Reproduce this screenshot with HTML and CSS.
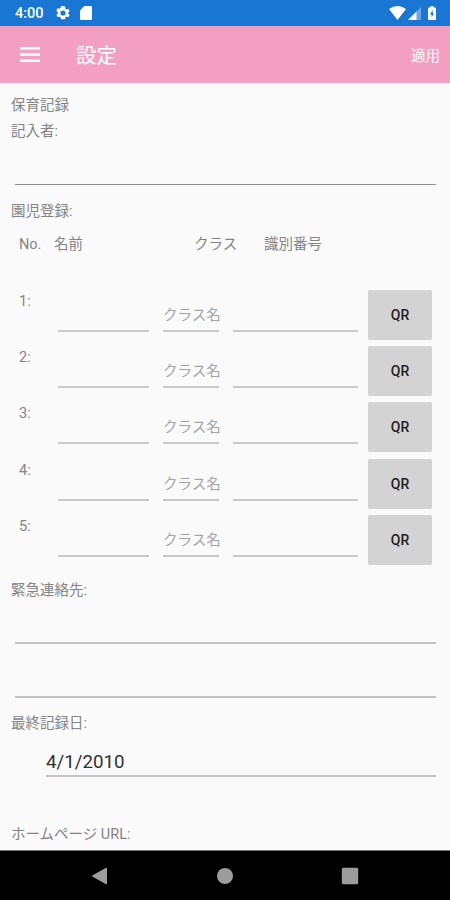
FILE: index.html
```html
<!DOCTYPE html>
<html lang="ja">
<head>
<meta charset="utf-8">
<title>設定</title>
<link rel="stylesheet" href="styles.css">
</head>
<body>
<div class="status">
  <span class="clock">4:00</span>
  <svg class="gear" viewBox="2 2 20 20"><path fill="#fff" fill-rule="evenodd" d="M19.4 13a7.5 7.5 0 0 0 0-2l2.1-1.6-2-3.5-2.5 1a7.5 7.5 0 0 0-1.7-1L15 2.2H9l-.4 2.7a7.5 7.5 0 0 0-1.7 1l-2.4-1-2 3.5L4.6 11a7.5 7.5 0 0 0 0 2l-2.1 1.6 2 3.5 2.4-1a7.5 7.5 0 0 0 1.7 1l.4 2.7h6l.4-2.7a7.5 7.5 0 0 0 1.7-1l2.4 1 2-3.5zM12 8.3a3.7 3.7 0 1 1 0 7.4 3.7 3.7 0 0 1 0-7.4z"/></svg>
  <svg class="card" viewBox="0 0 12 14"><path fill="#fff" d="M4.3 0H10.7Q12 0 12 1.3V12.7Q12 14 10.7 14H1.3Q0 14 0 12.7V4.5z"/></svg>
  <span class="spacer"></span>
  <svg class="wifi" viewBox="0 0 17 14"><path fill="#fff" d="M0 3Q8.5-3 17 3L8.5 14z"/></svg>
  <svg class="signal" viewBox="0 0 13 13"><path fill="#fff" opacity=".35" d="M13 0V13H0z"/><path fill="#fff" d="M8.5 4.5V13H0z"/></svg>
  <svg class="battery" viewBox="0 0 8 14"><path fill="#fff" d="M2.5 0h3v1.500H7q1 0 1 1V13q0 1-1 1H1q-1 0-1-1V2.500q0-1 1-1h1.500z"/><path fill="#1976d2" d="M4.7 4L2 8.400h1.600V11.500L6 7.200H4.700z"/></svg>
</div>
<header class="appbar">
  <svg class="menu" viewBox="0 0 20 15"><path fill="#fff" d="M0 0h20v2.500H0zM0 6.200h20v2.500H0zM0 12.400h20v2.500H0z"/></svg>
  <h1>設定</h1>
  <span class="apply">適用</span>
</header>
<main>
  <div class="label">保育記録</div>
  <div class="label">記入者:</div>
  <div class="field author"></div>
  <div class="label">園児登録:</div>
  <div class="heads"><span>No.</span><span>名前</span><span>クラス</span><span>識別番号</span></div>
  <div class="rows">
    <div class="row"><span class="num">1:</span><span class="cell name"></span><span class="cell class">クラス名</span><span class="cell ident"></span><span class="qr">QR</span></div>
    <div class="row"><span class="num">2:</span><span class="cell name"></span><span class="cell class">クラス名</span><span class="cell ident"></span><span class="qr">QR</span></div>
    <div class="row"><span class="num">3:</span><span class="cell name"></span><span class="cell class">クラス名</span><span class="cell ident"></span><span class="qr">QR</span></div>
    <div class="row"><span class="num">4:</span><span class="cell name"></span><span class="cell class">クラス名</span><span class="cell ident"></span><span class="qr">QR</span></div>
    <div class="row"><span class="num">5:</span><span class="cell name"></span><span class="cell class">クラス名</span><span class="cell ident"></span><span class="qr">QR</span></div>
  </div>
  <div class="label">緊急連絡先:</div>
  <div class="field contact-a"></div>
  <div class="field contact-b"></div>
  <div class="label">最終記録日:</div>
  <div class="field date">4/1/2010</div>
  <div class="label">ホームページ URL:</div>
</main>
<nav class="navbar">
  <svg viewBox="0 0 18 18"><path fill="#9c9c9c" d="M1.5 9L15.500 1Q17 .3 17 1.500V16.500Q17 17.700 15.500 17z"/></svg>
  <svg viewBox="0 0 18 18"><circle cx="9" cy="9" r="8" fill="#9c9c9c"/></svg>
  <svg viewBox="0 0 18 18"><rect x=".8" y=".8" width="16.4" height="16.4" rx="1.5" fill="#9c9c9c"/></svg>
</nav>
</body>
</html>
```
FILE: styles.css
```css
* { box-sizing: border-box; }
body {
  margin: 0;
  width: 450px;
  height: 900px;
  overflow: hidden;
  display: flex;
  flex-direction: column;
  background: #fafafa;
  color: #858585;
  font-family: Roboto, "Noto Sans CJK JP", sans-serif;
  font-size: 14.5px;
  font-weight: 400;
}
svg { display: block; flex: none; }
.status {
  flex: none;
  height: 25.5px;
  display: flex;
  align-items: center;
  padding: 1px 14px 0 15px;
  background: #1976d2;
  color: #fff;
}
.clock { width: 41px; font-size: 14.5px; font-weight: 500; }
.gear { width: 14px; height: 14px; }
.card { width: 12px; height: 14px; margin-left: 10px; }
.spacer { flex: 1; }
.wifi { width: 17px; height: 14px; }
.signal { width: 13px; height: 13px; margin: 1px 7px 0 2px; }
.battery { width: 8px; height: 14px; }
.appbar {
  flex: none;
  height: 57.5px;
  display: flex;
  align-items: center;
  padding: 0 10px 0 20px;
  background: #f29fc2;
  color: #fff;
}
.menu { width: 20px; height: 15px; }
h1 { flex: 1; margin: 0 0 0 36px; padding-top: 4px; font-size: 20.5px; font-weight: 400; line-height: 30px; }
main { flex: 1; min-height: 0; padding: 8px 14px 0 11px; }
.label { height: 26px; line-height: 29px; white-space: nowrap; }
.field { margin-left: 4px; border-bottom: 2px solid #c4c4c4; }
.author { height: 42px; margin-bottom: 12px; border-bottom: 1px solid #909090; }
.heads {
  display: grid;
  grid-template-columns: 35px 140px 70px 1fr;
  height: 43px;
  line-height: 43px;
  padding-left: 8px;
  white-space: nowrap;
}
.rows { padding-top: 21px; margin-bottom: 8.5px; }
.row { display: flex; align-items: flex-start; height: 56.2px; padding-left: 8px; }
.num { width: 39px; line-height: 29px; }
.cell {
  flex: none;
  height: 45px;
  padding-top: 4px;
  line-height: 49px;
  border-bottom: 2px solid #cacaca;
  color: #a5a5a5;
  white-space: nowrap;
}
.name { width: 91px; margin-right: 14px; }
.class { width: 56px; margin-right: 14px; }
.ident { width: 125px; margin-right: 10.5px; }
.qr {
  width: 64px;
  height: 50px;
  margin-top: 3px;
  margin-left: -0.5px;
  border-radius: 2px;
  background: #d3d3d3;
  color: #222;
  font-weight: 500;
  font-size: 14px;
  line-height: 51px;
  text-align: center;
}
.contact-a { height: 42px; }
.contact-b { height: 54px; margin-bottom: 11px; }
.date {
  height: 42px;
  margin: 0 0 43px 35px;
  line-height: 54px;
  color: #303030;
  font-size: 18.7px;
}
.navbar {
  flex: none;
  height: 50px;
  display: flex;
  align-items: center;
  justify-content: space-between;
  padding: 0 91px 0 90px;
  border-top: 1px solid #777;
  background: #000;
}
.navbar svg { width: 18px; height: 18px; }
```
